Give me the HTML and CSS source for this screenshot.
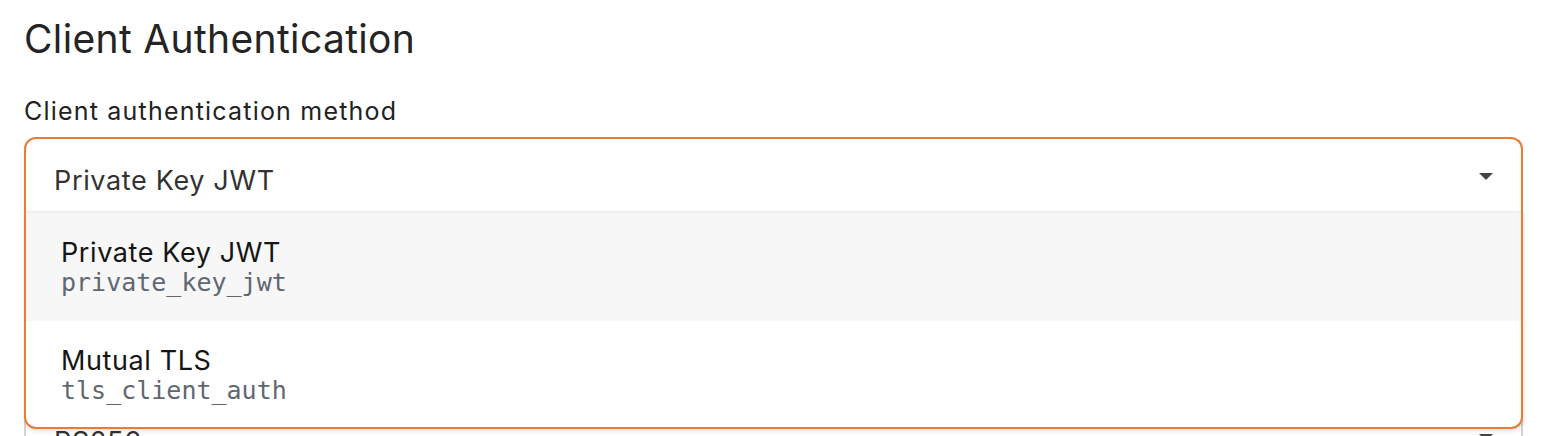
FILE: index.html
```html
<!DOCTYPE html>
<html>
<head>
<meta charset="utf-8">
<link rel="stylesheet" href="styles.css">
</head>
<body>
<section class="panel">
  <h2 class="title">Client Authentication</h2>
  <div class="field">
    <label class="label">Client authentication method</label>
    <div class="select-wrap">
      <div class="select focused">
        <span class="value">Private Key JWT</span>
        <span class="caret"></span>
      </div>
      <ul class="menu">
        <li class="option active">
          <span class="opt-name">Private Key JWT</span>
          <span class="opt-code">private_key_jwt</span>
        </li>
        <li class="option">
          <span class="opt-name">Mutual TLS</span>
          <span class="opt-code">tls_client_auth</span>
        </li>
      </ul>
    </div>
  </div>
  <div class="field next">
    <label class="label">Token endpoint signing algorithm</label>
    <div class="select-wrap">
      <div class="select">
        <span class="value">RS256</span>
        <span class="caret"></span>
      </div>
    </div>
  </div>
</section>
</body>
</html>
```
FILE: styles.css
```css
* { box-sizing: border-box; }
html, body { margin: 0; padding: 0; background: #fff; }
body {
  font-family: "Inter", "Liberation Sans", sans-serif;
  color: #222;
  overflow: hidden;
  height: 436px;
}
.panel {
  padding: 15px 19px 0 24px;
}
.title {
  margin: 0;
  font-size: 39px;
  line-height: 47px;
  font-weight: 400;
  color: #242424;
  letter-spacing: 0.35px;
}
.field { margin-top: 34px; }
.label {
  display: block;
  font-size: 25px;
  line-height: 30px;
  color: #222;
  letter-spacing: 1.2px;
  margin-bottom: 11px;
}
.select-wrap { position: relative; }
.select {
  height: 74px;
  border: 2px solid #d4d4d4;
  border-radius: 12px;
  display: flex;
  align-items: center;
  justify-content: space-between;
  padding: 10px 28px 0 28px;
  background: #fff;
}
.select.focused {
  border-color: #ee7b33;
  border-bottom: none;
  border-radius: 12px 12px 0 0;
}
.value {
  font-size: 27px;
  letter-spacing: 0.65px;
  color: #333;
}
.caret {
  width: 0;
  height: 0;
  border-left: 7px solid transparent;
  border-right: 7px solid transparent;
  border-top: 7px solid #444;
  margin-top: -8px;
}
.menu {
  position: absolute;
  left: 0;
  right: 0;
  top: 74px;
  margin: 0;
  padding: 0;
  list-style: none;
  background: #fff;
  border: 2px solid #ee7b33;
  border-top: none;
  border-radius: 0 0 12px 12px;
  overflow: hidden;
  z-index: 5;
  box-shadow: 1px 2px 4px rgba(0,0,0,0.12);
}
.option {
  display: flex;
  flex-direction: column;
  padding: 28px 35px 0 35px;
}
.option.active {
  background: #f7f7f7;
  height: 110px;
  box-shadow: inset 0 4px 4px -3px rgba(0,0,0,0.05);
}
.option + .option { height: 106px; padding-top: 26px; }
.opt-name {
  font-size: 27px;
  line-height: 28px;
  letter-spacing: 0.6px;
  color: #151515;
}
.opt-code {
  font-family: "DejaVu Sans Mono", "Liberation Mono", monospace;
  font-size: 25px;
  line-height: 28px;
  margin-top: 2px;
  color: #5f6871;
}
.next { margin-top: 147px; }
```
